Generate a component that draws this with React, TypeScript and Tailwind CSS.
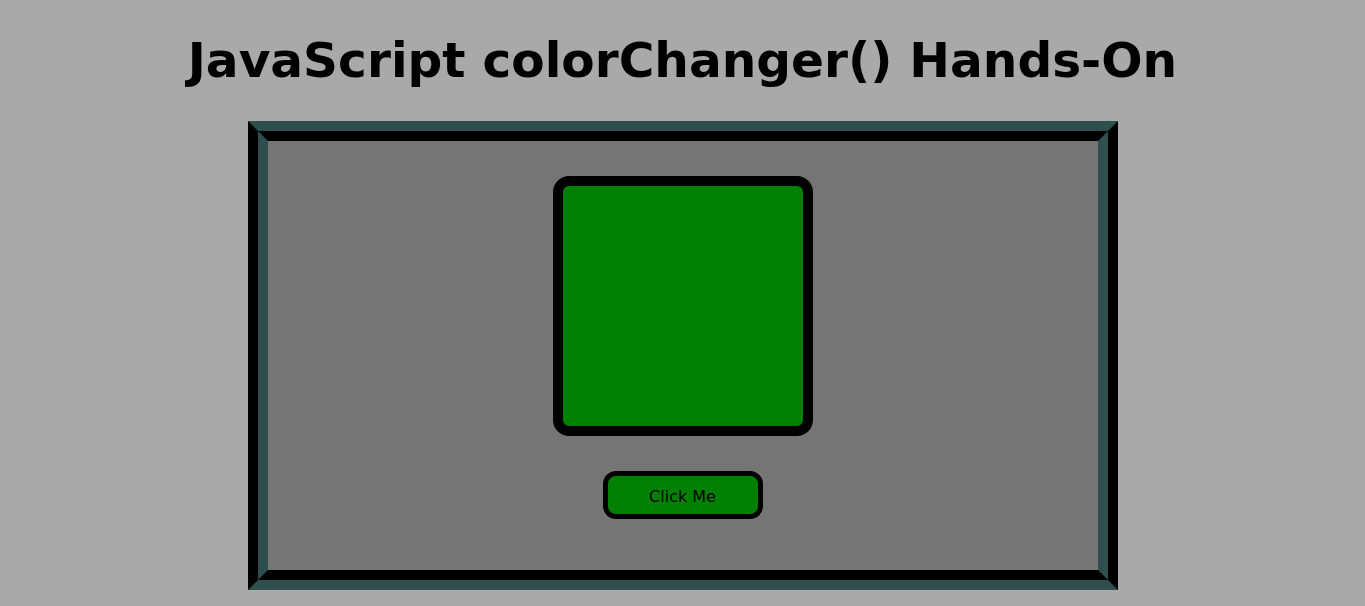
export default function App() {
  return (
    <div className="min-h-[606px] w-full bg-[#a9a9a9] font-['DejaVu_Sans',Verdana,sans-serif] text-black flex flex-col items-center">
      <h1 className="mt-[32px] mb-[33px] text-[48.6px] leading-[56px] font-bold">
        JavaScript colorChanger() Hands-On
      </h1>

      {/* Frame: two nested borders give the bevelled look */}
      <div className="w-[870px] border-y-[10px] border-y-[#2f4f4f] border-x-[10px] border-x-black">
        <div className="border-y-[10px] border-y-black border-x-[10px] border-x-[#2f4f4f] bg-[#757575] flex flex-col items-center pt-[35px] pb-[51px]">
          <div className="w-[260px] h-[260px] rounded-[16px] border-[10px] border-black bg-[#008000]" />
          <button className="mt-[35px] w-[160px] h-[48px] pt-[3px] rounded-[13px] border-[5px] border-black bg-[#008000] text-[16px] text-black">
            Click Me
          </button>
        </div>
      </div>
    </div>
  );
}
